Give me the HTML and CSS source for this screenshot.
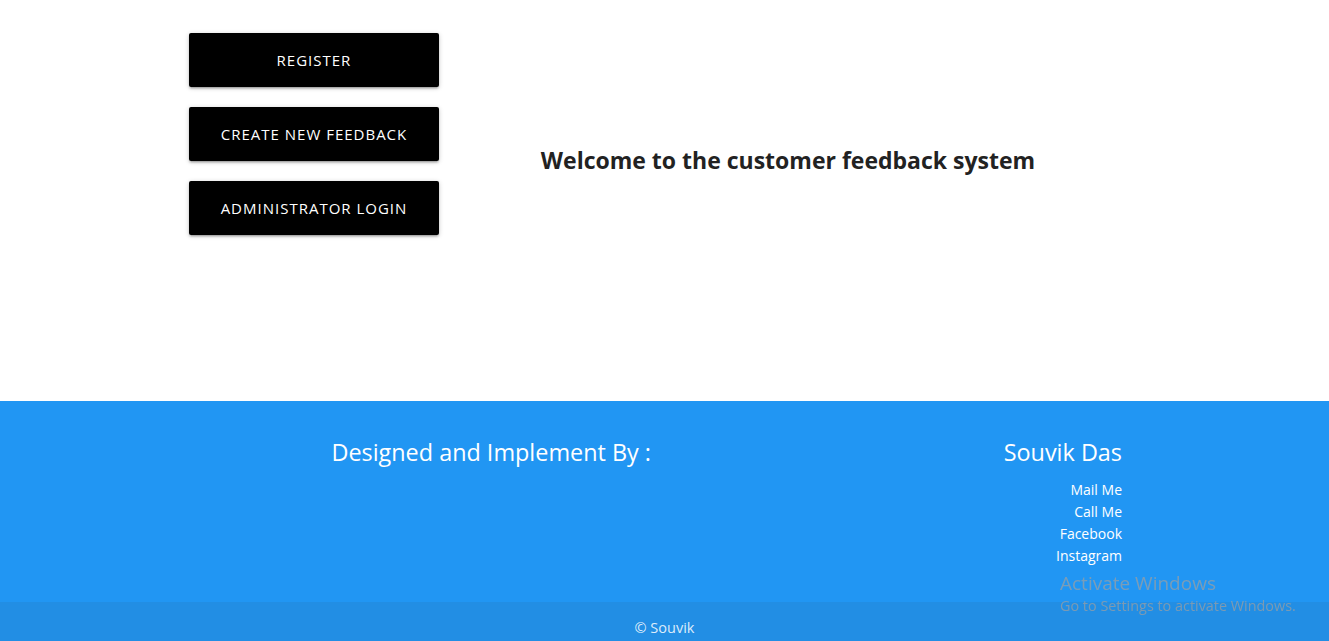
FILE: index.html
```html
<!DOCTYPE html>
<html lang="en">
<head>
<meta charset="utf-8">
<title>Customer Feedback System</title>
<link rel="stylesheet" href="styles.css">
</head>
<body>
<main class="main">
  <div class="actions">
    <a class="btn" href="#">Register</a>
    <a class="btn" href="#">Create New Feedback</a>
    <a class="btn" href="#">Administrator Login</a>
  </div>
  <div class="welcome">
    <h5 class="welcome-title">Welcome to the customer feedback system</h5>
  </div>
</main>
<footer class="page-footer">
  <div class="footer-row">
    <div class="footer-col left">
      <h5 class="footer-title">Designed and Implement By :</h5>
    </div>
    <div class="footer-col right">
      <h5 class="footer-title">Souvik Das</h5>
      <ul class="links">
        <li><a href="#">Mail Me</a></li>
        <li><a href="#">Call Me</a></li>
        <li><a href="#">Facebook</a></li>
        <li><a href="#">Instagram</a></li>
      </ul>
    </div>
  </div>
  <div class="footer-copyright">© Souvik</div>
</footer>
<div class="activate">
  <div class="activate-title">Activate Windows</div>
  <div class="activate-sub">Go to Settings to activate Windows.</div>
</div>
</body>
</html>
```
FILE: styles.css
```css
html, body {
  margin: 0;
  padding: 0;
}
body {
  font-family: "Open Sans", "Noto Sans", sans-serif;
  color: rgba(0,0,0,0.87);
  background: #fff;
  overflow: hidden;
}
.main {
  display: grid;
  grid-template-columns: 250px 1fr;
  width: 948px;
  margin-left: 189px;
  height: 401px;
  box-sizing: border-box;
}
.actions {
  display: flex;
  flex-direction: column;
  gap: 20px;
  padding-top: 33px;
}
.btn {
  display: flex;
  align-items: center;
  justify-content: center;
  height: 54px;
  background: #000;
  color: #fff;
  text-decoration: none;
  text-transform: uppercase;
  letter-spacing: 1px;
  font-size: 15px;
  border-radius: 2px;
  box-shadow: 0 2px 2px 0 rgba(0,0,0,0.14), 0 3px 1px -2px rgba(0,0,0,0.12), 0 1px 5px 0 rgba(0,0,0,0.2);
}
.welcome {
  text-align: center;
  padding-top: 145px;
}
.welcome-title {
  margin: 0;
  font-size: 23px;
  font-weight: 700;
  line-height: 30px;
  color: #222;
}
.page-footer {
  background: #2196f3;
  color: #fff;
}
.footer-row {
  display: grid;
  grid-template-columns: 651px 471px;
  padding-top: 36px;
  height: 201px;
  box-sizing: border-box;
}
.footer-col {
  text-align: right;
}
.footer-title {
  margin: 0;
  font-size: 23.4px;
  font-weight: 400;
  line-height: 30px;
}
.links {
  list-style: none;
  margin: 12px 0 0;
  padding: 0;
}
.links li {
  line-height: 22px;
  font-size: 14px;
}
.links a {
  color: #fff;
  text-decoration: none;
}
.footer-copyright {
  display: flex;
  align-items: center;
  justify-content: center;
  min-height: 50px;
  background: rgba(51,51,51,0.08);
  color: rgba(255,255,255,0.85);
  font-size: 14.5px;
}
.activate {
  position: fixed;
  left: 1060px;
  top: 571px;
  color: rgba(160,160,160,0.7);
  pointer-events: none;
}
.activate-title {
  font-size: 19px;
  line-height: 24px;
}
.activate-sub {
  font-size: 14.4px;
  line-height: 22px;
}
```
